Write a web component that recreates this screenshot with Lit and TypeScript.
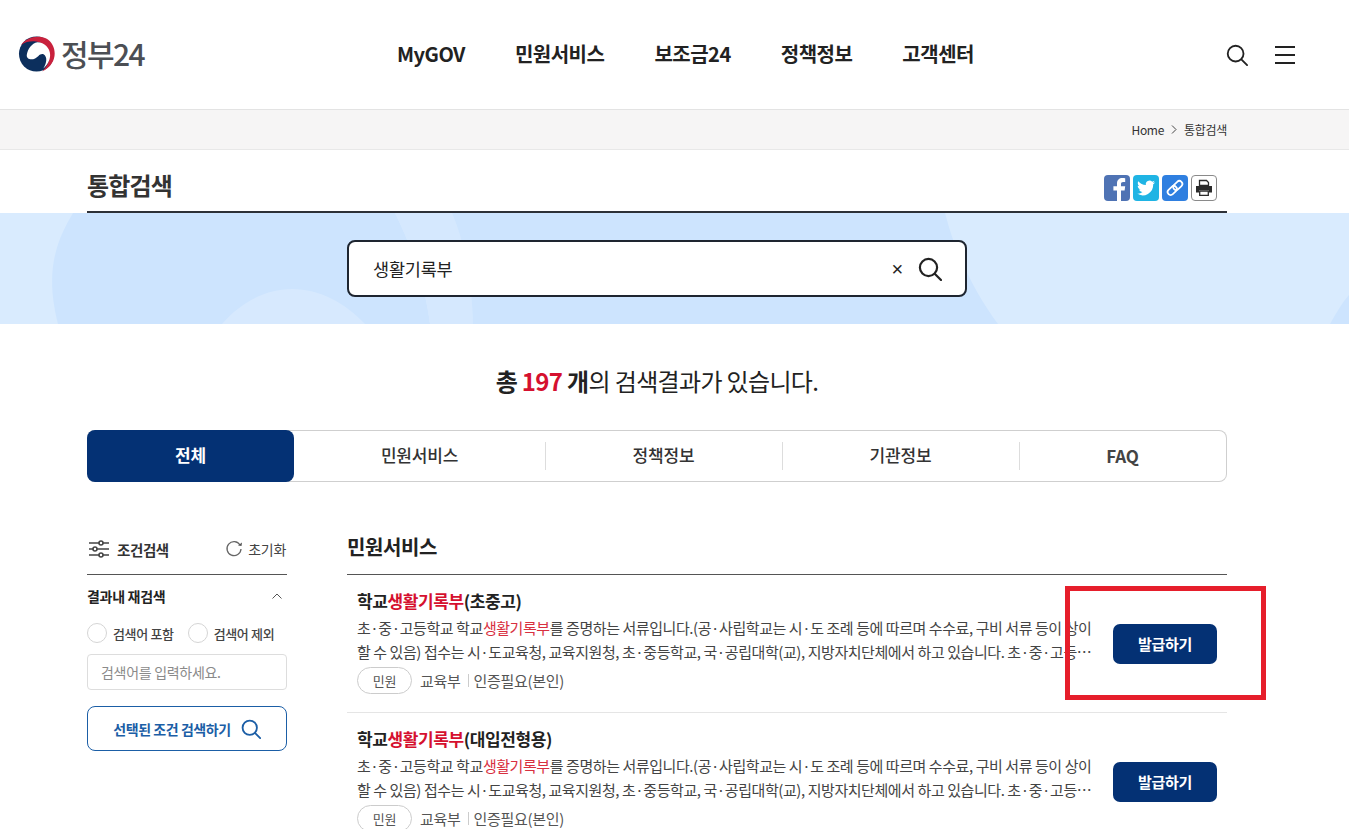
import { LitElement, html, css } from "lit";
import { customElement } from "lit/decorators.js";

const searchIcon = (size: number, color: string, sw = 2) => html`<svg width=${size} height=${size} viewBox="0 0 24 24" fill="none" stroke=${color} stroke-width=${sw} stroke-linecap="round"><circle cx="10.5" cy="10.5" r="8.6"/><path d="M17 17l6 6"/></svg>`;

const results = [
  { title: "(초중고)" },
  { title: "(대입전형용)" },
];

@customElement("app-root")
export class AppRoot extends LitElement {
  static styles = css`
    :host { display: block; position: relative; height: 829px; overflow: hidden; background: #fff; color: #1f1f1f; font-family: "Noto Sans CJK KR", "Noto Sans", sans-serif; }
    * { box-sizing: border-box; }
    .header { height: 110px; border-bottom: 1px solid #e3e3e3; display: flex; align-items: center; padding: 0 54px 0 18px; }
    .logo { display: flex; align-items: center; gap: 6px; width: 320px; color: #4c4f54; font-size: 30px; font-weight: 500; letter-spacing: -1.6px; line-height: 36px; padding-bottom: 1px; }
    .logo span { margin-top: -3px; }
    .logo svg { display: block; }
    .nav { display: flex; gap: 50px; margin-left: 59px; padding-bottom: 2px; font-size: 20px; font-weight: 700; letter-spacing: -0.5px; color: #222; line-height: 30px; white-space: nowrap; }
    .hicons { margin-left: auto; display: flex; align-items: center; gap: 27px; }
    .burger { width: 20px; height: 18px; display: flex; flex-direction: column; justify-content: space-between; }
    .burger i { display: block; height: 2px; background: #222; }
    .crumb { height: 40px; background: #f6f5f5; border-bottom: 1px solid #e8e8e8; }
    .wrap { width: 1140px; margin: 0 0 0 87px; }
    .crumb .wrap { display: flex; justify-content: flex-end; align-items: center; height: 39px; gap: 7px; font-size: 12px; letter-spacing: -0.3px; color: #333; }
    .titlebar { height: 63px; display: flex; align-items: center; justify-content: space-between; border-bottom: 2px solid #2d3138; }
    .titlebar h1 { margin: 8px 0 0; font-size: 24px; font-weight: 700; letter-spacing: -0.8px; color: #333; }
    .share { display: flex; gap: 3px; padding: 15px 10px 0 0; }
    .share span { width: 26px; height: 26px; border-radius: 4px; display: block; overflow: hidden; }
    .share svg { display: block; }
    .fb { background: #4f73b4; }
    .tw { background: #1fb4e4; }
    .lk { background: #2f7fe0; }
    .pr { background: #fff; border: 1px solid #8a8a8a; }
    .hero { position: relative; height: 111px; background: #d9ebfe; overflow: hidden; display: flex; justify-content: flex-start; align-items: flex-start; padding: 27px 0 0 347px; }
    .deco { position: absolute; left: 0; top: 0; }
    .search { position: relative; width: 620px; height: 57px; background: #fff; border: 2px solid #1e2530; border-radius: 8px; display: flex; align-items: center; padding: 0 23px 0 24px; font-size: 17.500px; color: #222; letter-spacing: -0.2px; }
    .search .q { flex: 1; }
    .search .x { font-size: 20px; margin-right: 15px; font-family: "Liberation Sans", sans-serif; line-height: 1; }
    .count { margin: 39px 0 32px; height: 35px; line-height: 35px; text-align: center; font-size: 24px; letter-spacing: -0.65px; color: #222; font-weight: 400; }
    .count b { font-weight: 700; }
    .count em { font-style: normal; font-weight: 700; color: #d5102f; }
    .tabs { height: 52px; display: flex; border: 1px solid #cfcfcf; border-left: 0; border-radius: 8px; font-size: 17px; color: #333; }
    .tab { position: relative; flex: 0 0 237px; display: flex; align-items: center; justify-content: center; font-weight: 500; letter-spacing: -0.2px; padding-bottom: 3px; }
    .tab + .tab::before { content: ""; position: absolute; left: 0; top: 11px; height: 28px; width: 1px; background: #ddd; }
    .tab.first + .tab::before { display: none; }
    .tab.first { flex: 0 0 207px; margin: -1px 0; background: #043174; color: #fff; font-weight: 700; border-radius: 8px; }
    .tab:nth-child(2) { flex: 0 0 251px; }
    .tab:last-child { flex: 1; font-weight: 700; color: #444; padding-bottom: 1px; }
    .cols { display: flex; gap: 60px; margin-top: 46px; }
    .side { width: 200px; flex: none; }
    .side-head { height: 47px; display: flex; align-items: center; border-bottom: 1px solid #555; font-size: 14.500px; letter-spacing: -0.4px; padding: 0 1px 4px 2px; }
    .side-head b { margin-left: 8px; font-weight: 700; color: #333; }
    .reset { margin-left: auto; display: flex; align-items: center; gap: 5px; font-size: 14px; color: #444; letter-spacing: -0.3px; }
    .ac { display: flex; justify-content: space-between; align-items: center; height: 40px; font-size: 14px; font-weight: 700; color: #222; letter-spacing: -0.3px; padding-right: 5px; margin-top: 1px; }
    .radios { display: flex; align-items: center; height: 30px; margin-top: 2px; font-size: 13px; color: #444; letter-spacing: -0.35px; font-weight: 500; }
    .radio { width: 20px; height: 20px; border: 1px solid #d5d5d5; border-radius: 50%; margin-right: 6px; flex: none; }
    .radios span + .radio { margin-left: 14px; }
    .input { margin-top: 6px; height: 36px; border: 1px solid #ddd; border-radius: 4px; display: flex; align-items: center; padding-left: 13px; font-size: 14px; color: #8a8a8a; letter-spacing: -0.3px; }
    .go { margin-top: 16px; height: 45px; border: 1px solid #1b5ea6; border-radius: 8px; display: flex; align-items: center; justify-content: center; gap: 10px; color: #1b5ea6; font-size: 14px; font-weight: 700; letter-spacing: -0.45px; }
    .main { width: 880px; flex: none; }
    .main h2 { margin: 0; height: 47px; padding-top: 4px; border-bottom: 1px solid #555; font-size: 20px; font-weight: 700; letter-spacing: -0.4px; color: #222; line-height: 30px; }
    .row { display: flex; align-items: center; height: 138px; border-bottom: 1px solid #e5e5e5; padding: 0 10px; }
    .row-body { width: 734px; flex: none; align-self: flex-start; padding-top: 14px; }
    .row h3 { margin: 0 0 3px; font-size: 17px; line-height: 24px; font-weight: 700; color: #222; letter-spacing: -0.4px; }
    .red { color: #d5102f; }
    .row p { margin: 0; width: 736px; font-size: 15px; line-height: 24px; color: #444; letter-spacing: -0.43px; height: 48px; overflow: hidden; display: -webkit-box; -webkit-line-clamp: 2; -webkit-box-orient: vertical; }
    .row p .red { color: #d8303f; }
    .meta { display: flex; align-items: center; margin-top: 3px; font-size: 15px; color: #555; letter-spacing: -0.3px; }
    .pill { width: 55px; height: 27px; border: 1px solid #ccc; border-radius: 14px; display: flex; align-items: center; justify-content: center; font-size: 13px; margin-right: 8px; }
    .sep { width: 1px; height: 13px; background: #ccc; margin: 0 5px 0 7px; }
    .btn { margin-left: 22px; width: 104px; height: 40px; border-radius: 7px; background: #043174; color: #fff; font-size: 15px; font-weight: 700; display: flex; align-items: center; justify-content: center; letter-spacing: -0.25px; }
    .mark { position: absolute; left: 1065px; top: 586px; width: 201px; height: 114px; border: 5px solid #e61e2b; pointer-events: none; }
  `;

  render() {
    return html`
      <div class="header">
        <div class="logo">
          <svg width="37" height="36" viewBox="0 0 38 36">
            <circle cx="19" cy="18" r="18" fill="#0c2f5d"/>
            <path d="M3 9C8 1 20 -2 29 2 38 7 40 19 35 27 33 31 29 34 25 36 30 31 33 25 32 18 31 10 24 5 16 5 11 5 7 6 3 9Z" fill="#c9213d"/>
            <path d="M9 19C10 13 14 7 20 6 27 6 33 12 33 19 33 25 30 29 26 33 29 28 30 23 28 20 26 17 23 18 21 20 18 23 13 25 10 22 9 21 9 20 9 19Z" fill="#fff"/>
          </svg>
          <span>정부24</span>
        </div>
        <div class="nav"><span>MyGOV</span><span>민원서비스</span><span>보조금24</span><span>정책정보</span><span>고객센터</span></div>
        <div class="hicons">
          ${searchIcon(22, "#222", 2)}
          <div class="burger"><i></i><i></i><i></i></div>
        </div>
      </div>
      <div class="crumb"><div class="wrap"><span>Home</span>
        <svg width="6" height="9" viewBox="0 0 6 9" fill="none" stroke="#444"><path d="M1 .5l4 4-4 4"/></svg>
        <span>통합검색</span></div></div>
      <div class="wrap titlebar">
        <h1>통합검색</h1>
        <div class="share">
          <span class="fb"><svg width="26" height="26" viewBox="0 0 26 26"><path d="M17 26V15.500h3.600l.6-4.200H17V9c0-1.300.5-2.100 2.200-2.100h2V3.200C20.800 3.100 19.600 3 18.400 3 15.200 3 13 4.900 13 8.500v2.800H9.400v4.200H13V26z" fill="#fff"/></svg></span>
          <span class="tw"><svg width="26" height="26" viewBox="0 0 26 26"><path d="M22 7.200c-.7.300-1.400.5-2.100.6.800-.5 1.300-1.200 1.600-2-.7.400-1.500.7-2.300.9a3.700 3.700 0 0 0-6.300 3.400C9.800 9.900 7.100 8.500 5.300 6.200c-1 1.700-.5 3.900 1.100 5-.6 0-1.200-.2-1.700-.5 0 1.800 1.300 3.300 3 3.700-.5.100-1.100.2-1.700.1.500 1.500 1.900 2.500 3.500 2.600A7.500 7.500 0 0 1 4 18.600a10.500 10.500 0 0 0 16.200-9.300c.7-.5 1.300-1.200 1.800-2.100z" fill="#fff"/></svg></span>
          <span class="lk"><svg width="26" height="26" viewBox="0 0 26 26" fill="none" stroke="#fff" stroke-width="1.700"><rect x="5" y="12.500" width="10.500" height="6" rx="3" transform="rotate(-45 10.250 15.500)"/><rect x="10.500" y="7.500" width="10.500" height="6" rx="3" transform="rotate(-45 15.750 10.500)"/></svg></span>
          <span class="pr"><svg width="24" height="24" viewBox="0 0 24 24"><path d="M7.500 4.500h7l2 2v3h-9z" fill="none" stroke="#2b2b2b" stroke-width="1.300"/><path d="M4 10h16v6.500h-3V14H7v2.500H4z" fill="#2b2b2b"/><path d="M7.700 15h8.600v4.300H7.700z" fill="none" stroke="#2b2b2b" stroke-width="1.300"/></svg></span>
        </div>
      </div>
      <div class="hero">
        <svg class="deco" width="1349" height="111" viewBox="0 0 1349 111">
          <path d="M73 0C55 30 45 60 58 111H430C425 70 410 30 395 0Z" fill="#cde4fe"/>
          <path d="M395 0H452C465 30 472 70 473 111H430C425 70 410 30 395 0Z" fill="#d5e8fe"/>
          <path d="M452 0H945C955 40 975 80 998 111H473C472 70 465 30 452 0Z" fill="#cde4fe"/>
          <path d="M222 111C240 90 265 76 292 76 320 76 345 90 365 111Z" fill="#d7e9fe"/>
          <path d="M1330 111C1336 100 1342 90 1349 82V111Z" fill="#cde4fe"/>
        </svg>
        <div class="search">
          <span class="q">생활기록부</span>
          <span class="x">×</span>
          ${searchIcon(24, "#222", 2.200)}
        </div>
      </div>
      <div class="wrap">
        <div class="count"><b>총</b> <em>197</em> <b>개</b>의 검색결과가 있습니다.</div>
        <div class="tabs">
          <div class="tab first">전체</div><div class="tab">민원서비스</div><div class="tab">정책정보</div><div class="tab">기관정보</div><div class="tab">FAQ</div>
        </div>
        <div class="cols">
          <div class="side">
            <div class="side-head">
              <svg width="20" height="20" viewBox="0 0 20 20" fill="none" stroke="#444" stroke-width="1.600"><path d="M0 4h10M14 4h6M0 10h4M8 10h12M0 16h10M14 16h6"/><circle cx="12" cy="4" r="2"/><circle cx="6" cy="10" r="2"/><circle cx="12" cy="16" r="2"/></svg>
              <b>조건검색</b>
              <span class="reset">
                <svg width="18" height="18" viewBox="0 0 18 18" fill="none" stroke="#666" stroke-width="1.300"><path d="M15 5A7 7 0 1 0 16 9"/><path d="M13 5.500l3.500.5.500-3.500z" fill="#555" stroke="none"/></svg>
                초기화
              </span>
            </div>
            <div class="ac"><span>결과내 재검색</span>
              <svg width="10" height="6" viewBox="0 0 10 6" fill="none" stroke="#555"><path d="M.5 5.500L5 1l4.500 4.500"/></svg>
            </div>
            <div class="radios"><i class="radio"></i><span>검색어 포함</span><i class="radio"></i><span>검색어 제외</span></div>
            <div class="input">검색어를 입력하세요.</div>
            <div class="go">선택된 조건 검색하기 ${searchIcon(20, "#1b5ea6", 2.200)}</div>
          </div>
          <div class="main">
            <h2>민원서비스</h2>
            ${results.map((r) => html`
              <div class="row">
                <div class="row-body">
                  <h3>학교<span class="red">생활기록부</span>${r.title}</h3>
                  <p>초·중·고등학교 학교<span class="red">생활기록부</span>를 증명하는 서류입니다.(공·사립학교는 시·도 조례 등에 따르며 수수료, 구비 서류 등이 상이할 수 있음) 접수는 시·도교육청, 교육지원청, 초·중등학교, 국·공립대학(교), 지방자치단체에서 하고 있습니다. 초·중·고등학교 학교생활기록부를 증명하는 서류입니다. 초·중·고등학교</p>
                  <div class="meta"><span class="pill">민원</span><span>교육부</span><i class="sep"></i><span>인증필요(본인)</span></div>
                </div>
                <div class="btn">발급하기</div>
              </div>`)}
          </div>
        </div>
      </div>
      <div class="mark"></div>
    `;
  }
}
